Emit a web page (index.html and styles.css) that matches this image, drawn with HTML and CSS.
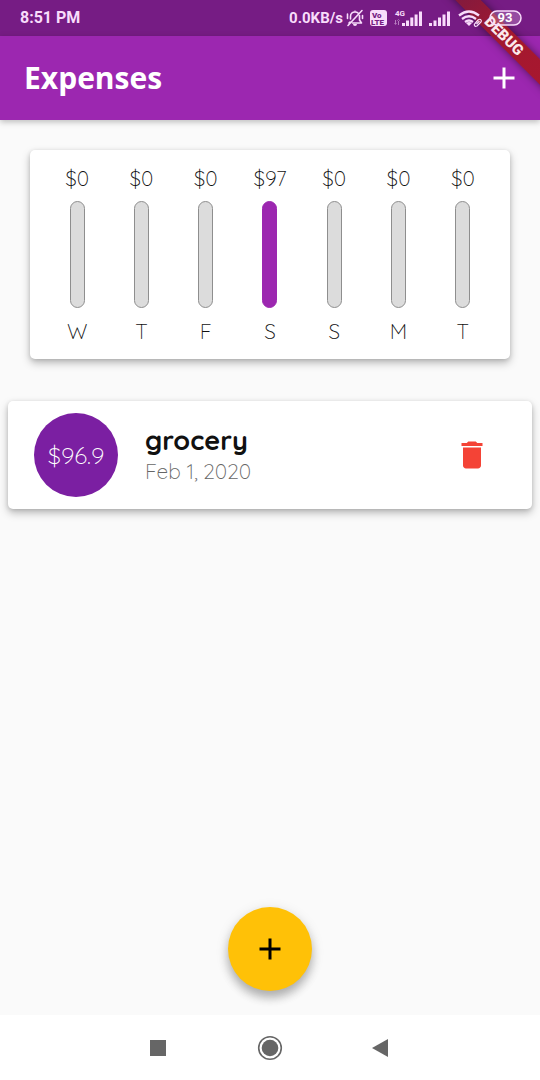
FILE: index.html
```html
<!DOCTYPE html>
<html lang="en">
<head>
<meta charset="utf-8">
<meta name="viewport" content="width=device-width, initial-scale=1">
<title>Expenses</title>
<link rel="stylesheet" href="styles.css">
</head>
<body>
<div class="app">
  <div class="debug-banner"><span class="debug-text">DEBUG</span></div>
  <div class="status-bar">
    <span class="clock">8:51 PM</span>
    <div class="status-icons">
      <span class="speed">0.0KB/s</span>
      <svg class="mute" width="18" height="18" viewBox="0 0 18 18" fill="none" stroke="currentColor" stroke-width="1.6" stroke-linecap="round" stroke-linejoin="round"><path d="M4.500 10V7.500C4.500 4.500 6.500 3 9 3q2 0 3 1M13.500 6.500V11l2 3H6.500M4 13l-1 1M16 1.500L2 16.500M1.500 5v4.500M16.500 6.500v3"/><path d="M7 15h4a2 2 0 0 1-4 0zM8 2.500a1 1 0 0 1 2 0z" fill="currentColor" stroke="none"/></svg>
      <svg class="volte" width="17" height="16" viewBox="0 0 17 16"><rect width="17" height="16" rx="3" fill="currentColor"/><text class="volte-text" x="2" y="8">Vo</text><text class="volte-text" x="1" y="15">LTE</text></svg>
      <svg class="signal-4g" width="28" height="18" viewBox="0 0 28 18" fill="currentColor"><text class="network-text" x="1" y="7">4G</text><path d="M1 11h1v5H1zM0 14h3l-1.500 2zM4 11h1v5H4zM3 12h3L4.500 10z" opacity=".5"/><path d="M8 14h3v3H8zM12 11.500h3V17h-3zM16.300 8.500h3V17h-3zM20.600 5.500h3V17h-3zM25 2.500h3V17h-3z"/></svg>
      <svg class="signal" width="21" height="18" viewBox="0 0 21 18" fill="currentColor"><path d="M0 14h3v3H0zM4.500 11.500h3V17h-3zM9 8.500h3V17H9zM13.500 5.500h3V17h-3zM18 2.500h3V17h-3z"/></svg>
      <svg class="wifi" width="24" height="18" viewBox="0 0 24 18" fill="none" stroke="currentColor" stroke-width="2.300"><path d="M1 6.500Q11 -1.500 21 6.500M4 10Q11 4.500 18 10M7 13Q11 10 15 13"/><path d="M8 14q3-2 6 0l-3 3z" fill="currentColor" stroke="none"/><path stroke-width="1.200" d="M17 14.500l3-3.500q2-1.500 3 0t-1 3l-3 3q-2 1-2.500-.500t.5-2zM18.500 15l3-3"/></svg>
      <svg class="battery" width="33" height="16" viewBox="0 0 33 16"><rect x="1" y="1" width="31" height="14" rx="7" fill="currentColor" fill-opacity=".25" stroke="currentColor" stroke-width="1.500"/><text class="battery-text" x="16" y="12">93</text></svg>
    </div>
  </div>
  <header class="app-bar">
    <h1 class="title">Expenses</h1>
    <button class="icon-button" aria-label="Add expense"><svg width="36" height="36" viewBox="0 0 24 24" fill="currentColor"><path d="M19 13h-6v6h-2v-6H5v-2h6V5h2v6h6z"/></svg></button>
  </header>
  <main class="content">
    <section class="card chart" aria-label="Spending this week">
      <div class="day"><span>$0</span><div class="bar"></div><span>W</span></div>
      <div class="day"><span>$0</span><div class="bar"></div><span>T</span></div>
      <div class="day"><span>$0</span><div class="bar"></div><span>F</span></div>
      <div class="day"><span>$97</span><div class="bar bar-full"></div><span>S</span></div>
      <div class="day"><span>$0</span><div class="bar"></div><span>S</span></div>
      <div class="day"><span>$0</span><div class="bar"></div><span>M</span></div>
      <div class="day"><span>$0</span><div class="bar"></div><span>T</span></div>
    </section>
    <article class="card expense">
      <div class="amount">$96.9</div>
      <div class="details">
        <h2 class="name">grocery</h2>
        <p class="date">Feb 1, 2020</p>
      </div>
      <button class="icon-button delete" aria-label="Delete grocery"><svg width="36" height="36" viewBox="0 0 24 24" fill="currentColor"><path d="M6 19c0 1.100.9 2 2 2h8c1.100 0 2-.9 2-2V7H6v12zM19 4h-3.500l-1-1h-5l-1 1H5v2h14V4z"/></svg></button>
    </article>
    <button class="fab" aria-label="Add expense"><svg width="36" height="36" viewBox="0 0 24 24" fill="currentColor"><path d="M19 13h-6v6h-2v-6H5v-2h6V5h2v6h6z"/></svg></button>
  </main>
  <nav class="nav-bar">
    <button class="nav-button" aria-label="Recent apps"><svg width="28" height="28" viewBox="0 0 28 28" fill="currentColor"><path d="M6 6h16v16H6z"/></svg></button>
    <button class="nav-button" aria-label="Home"><svg width="28" height="28" viewBox="0 0 28 28" fill="currentColor"><circle cx="14" cy="14" r="11.300" fill="none" stroke="currentColor" stroke-width="1.600"/><circle cx="14" cy="14" r="8.300"/></svg></button>
    <button class="nav-button" aria-label="Back"><svg width="28" height="28" viewBox="0 0 28 28" fill="currentColor"><path d="M4 14L20 5v18z"/></svg></button>
  </nav>
</div>
</body>
</html>
```
FILE: styles.css
```css
* { box-sizing: border-box; }

body {
  margin: 0;
  background: #fafafa;
  color: #111111;
  font-family: Quicksand, Lato, sans-serif;
}

h1, h2, p { margin: 0; }

button {
  display: flex;
  align-items: center;
  justify-content: center;
  padding: 0;
  border: 0;
  background: none;
  color: inherit;
  cursor: pointer;
}

.app {
  position: relative;
  display: flex;
  flex-direction: column;
  min-height: 100vh;
  overflow: hidden;
}

.status-bar {
  display: flex;
  align-items: center;
  justify-content: space-between;
  height: 36px;
  padding: 0 18px 0 20px;
  background: #761c84;
  color: #f8dcfb;
  font: 700 16px/20px Roboto, sans-serif;
}

.status-icons {
  position: relative;
  z-index: 3;
  display: flex;
  align-items: center;
}

.speed { font-size: 15px; }
.mute { margin-left: 3px; }
.volte { margin-left: 6px; }
.signal-4g { margin-left: 7px; }
.signal { margin-left: 7px; }
.wifi { margin-left: 8px; }
.battery { margin-left: 7px; }

.volte-text { font: 900 8px Roboto, sans-serif; fill: #761c84; }
.network-text { font: 700 8px Roboto, sans-serif; }
.battery-text { font: 700 13px Roboto, sans-serif; fill: #ffffff; text-anchor: middle; }

.debug-banner {
  position: absolute;
  top: 27px;
  right: -34px;
  z-index: 2;
  width: 140px;
  height: 18px;
  transform: rotate(45deg);
  background: linear-gradient(90deg, #7d1a40, #a3182f 50%, #a8172f);
  box-shadow: 0 0 9px rgba(0, 0, 0, 0.5);
  color: #fbe9ec;
  font: 900 15px/18px Roboto, sans-serif;
  text-align: center;
  pointer-events: none;
}

.app-bar {
  display: flex;
  align-items: center;
  justify-content: space-between;
  height: 84px;
  padding: 0 18px 0 24px;
  background: #9c27b0;
  box-shadow: 0 2px 6px rgba(0, 0, 0, 0.25);
  color: #ffffff;
}

.title { font: 700 30px/40px "Open Sans", sans-serif; }

.content {
  flex: 1;
  display: flex;
  flex-direction: column;
  padding: 30px 8px 24px;
}

.card {
  border-radius: 5px;
  background: #ffffff;
  box-shadow: 0 4px 9px rgba(0, 0, 0, 0.26), 0 1px 4px rgba(0, 0, 0, 0.12);
}

.chart {
  display: flex;
  margin: 0 22px;
  padding: 14px 15px;
  font-size: 21px;
  font-weight: 300;
  line-height: 28px;
}

.day {
  flex: 1;
  display: flex;
  flex-direction: column;
  align-items: center;
  gap: 9px;
}

.bar {
  width: 15px;
  height: 107px;
  border: 1px solid #8e8e8e;
  border-radius: 8px;
  background: #dcdcdc;
}

.bar-full {
  border-color: #9c27b0;
  background: #9c27b0;
}

.expense {
  display: flex;
  align-items: center;
  gap: 27px;
  margin-top: 42px;
  padding: 12px 42px 12px 26px;
}

.amount {
  display: flex;
  align-items: center;
  justify-content: center;
  width: 84px;
  height: 84px;
  border-radius: 50%;
  background: #7b1fa2;
  color: #ffffff;
  font-size: 24px;
  font-weight: 300;
}

.details { flex: 1; }
.name { padding-bottom: 2px; font-size: 27px; font-weight: 700; line-height: 30px; }
.date { color: #666666; font-size: 21px; font-weight: 300; line-height: 28px; }
.delete { color: #f44336; }

.fab {
  align-self: center;
  width: 84px;
  height: 84px;
  margin-top: auto;
  border-radius: 50%;
  background: #ffc107;
  box-shadow: 0 7px 10px rgba(0, 0, 0, 0.24), 0 3px 14px rgba(0, 0, 0, 0.12);
  color: #000000;
}

.nav-bar {
  display: flex;
  align-items: center;
  justify-content: center;
  gap: 84px;
  height: 65px;
  background: #ffffff;
  color: #666666;
}
```
